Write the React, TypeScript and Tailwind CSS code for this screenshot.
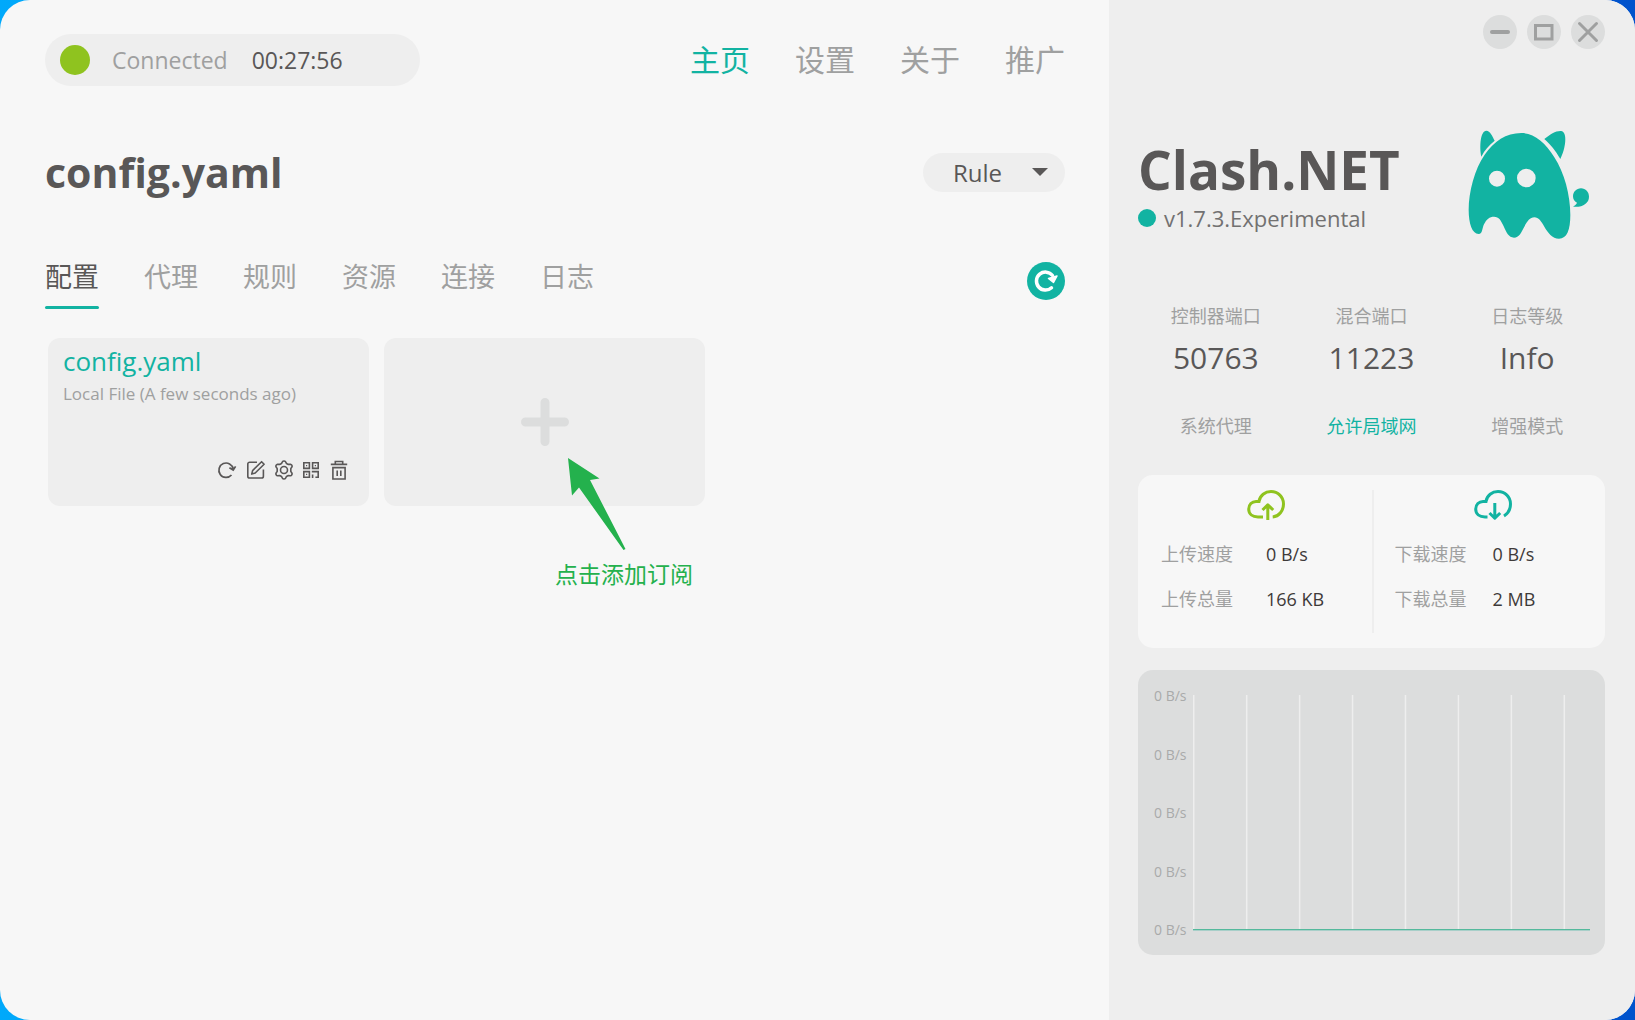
import { useState } from 'react';

const navItems = ['主页', '设置', '关于', '推广'];

const tabs = ['配置', '代理', '规则', '资源', '连接', '日志'];

const ports = [
  { label: '控制器端口', value: '50763' },
  { label: '混合端口', value: '11223' },
  { label: '日志等级', value: 'Info' },
];

const switches = [
  { label: '系统代理', on: false },
  { label: '允许局域网', on: true },
  { label: '增强模式', on: false },
];

const speeds = ['0 B/s', '0 B/s', '0 B/s', '0 B/s', '0 B/s'];

function GhostLogo() {
  return (
    <svg viewBox="0 0 450 390" className="w-[150px] h-[130px]" fill="#12b3a2" aria-label="Clash.NET logo">
      <path
        fillRule="evenodd"
        d="M214 39C252 39 285 66 313 112C343 158 361 225 361 285C361 330 351 356 327 356C307 356 293 337 283 320C273 303 266 292 253 292C240 292 232 303 223 320C214 337 207 353 192 353C176 353 169 337 161 319C153 301 147 290 132 290C119 290 109 298 102 313C96 325 98 342 86 342C66 342 56 310 56 270C56 215 74 147 104 104C132 64 168 39 214 39ZM141 152a24 24 0 1 0 0 48a24 24 0 1 0 0-48ZM229 146a28 28 0 1 0 0 56a28 28 0 1 0 0-56Z"
      />
      <path d="M94 110C88 80 91 32 109 32C120 32 128 50 134 62C117 75 104 90 94 110Z" />
      <path d="M283 57C300 43 318 32 333 33C354 36 347 86 331 117C316 91 303 75 283 57Z" />
      <path d="M393 205C407 205 417 216 417 230C417 250 397 263 369 260C375 256 380 252 381 248C373 245 369 237 369 229C369 216 379 205 393 205Z" />
    </svg>
  );
}

function ReloadIcon() {
  return (
    <svg viewBox="1 0 20 20" className="w-5 h-5" fill="none" stroke="currentColor" strokeWidth="1.7">
      <path d="M15.5 15A7.2 7.2 0 1 1 17.2 9" />
      <path d="M13.4 7.8L17.2 10L19.6 6.4" />
      <path d="M14.5 8.3L17.8 7.2L17.2 9.8Z" fill="currentColor" stroke="none" />
    </svg>
  );
}

function EditIcon() {
  return (
    <svg viewBox="-1 0 20 20" className="w-5 h-5" fill="none" stroke="currentColor" strokeWidth="1.6">
      <path d="M11 2.2H3.6A1.8 1.8 0 0 0 1.8 4V16.2A1.8 1.8 0 0 0 3.6 18H15.6A1.8 1.8 0 0 0 17.4 16.2V9.5" />
      <path d="M15.6 1.7L18.1 4.3L9.2 13L5.7 14.1L6.6 10.6Z" strokeLinejoin="round" />
    </svg>
  );
}

function GearIcon() {
  return (
    <svg viewBox="-1 0 20 20" className="w-5 h-5" fill="none" stroke="currentColor" strokeWidth="1.6" strokeLinejoin="round">
      <path d="M8.6 1.5C9.2 .8 10.8 .8 11.4 1.5L12.4 3.4C12.9 3.9 13.6 4.3 14.3 4.4L16.5 4.2C17.5 4.3 18.4 5.8 18 6.8L16.8 8.6V11.4L18 13.2C18.4 14.2 17.5 15.7 16.5 15.8L14.3 15.6C13.6 15.7 12.9 16.1 12.4 16.6L11.4 18.5C10.8 19.2 9.2 19.2 8.6 18.5L7.6 16.6C7.1 16.1 6.4 15.7 5.7 15.6L3.5 15.8C2.5 15.7 1.6 14.2 2 13.2L3.2 11.4V8.6L2 6.8C1.6 5.8 2.5 4.3 3.5 4.2L5.7 4.4C6.4 4.3 7.1 3.9 7.6 3.4Z" />
      <circle cx="10" cy="10" r="3.5" />
    </svg>
  );
}

function QrIcon() {
  return (
    <svg viewBox="0 0 20 20" className="w-5 h-5" fill="none" stroke="currentColor" strokeWidth="1.6">
      <path d="M2.8 2.8H8.4V8.4H2.8ZM11.6 2.8H17.2V8.4H11.6ZM2.8 11.6H8.4V17.2H2.8Z" />
      <path d="M5 5h1.2v1.2H5ZM13.8 5H15v1.2h-1.2ZM5 13.8h1.2V15H5Z" fill="currentColor" stroke="none" />
      <path d="M10.8 11.6H17.2V17.2H14.4M11.6 14.6V18" />
    </svg>
  );
}

function TrashIcon() {
  return (
    <svg viewBox="0 0 20 20" className="w-5 h-5" fill="none" stroke="currentColor" strokeWidth="1.6">
      <path d="M1.8 4.4H18.2M6.3 4.4V1.5H13.7V4.4M3.9 7.6H16.1V19H3.9Z" />
      <path d="M8.2 10.4V16M11.8 10.4V16" />
    </svg>
  );
}

function CloudIcon({ up }: { up: boolean }) {
  return (
    <svg
      viewBox="0 0 38 30"
      className="w-[38px] h-[30px]"
      fill="none"
      stroke={up ? '#8fc31f' : '#12b3a2'}
      strokeWidth="3"
    >
      <path d={up
        ? 'M16 27H11C5.5 27 1.7 24 1.7 19C1.7 14.5 5 11.4 9 11.4H12C13 5.5 18 1.6 24 1.6C31 1.6 36.5 7 36.5 14C36.5 20.5 32 26.5 25.7 27'
        : 'M13.5 27H11C5.5 27 1.7 24 1.7 19C1.7 14.5 5 11.4 9 11.4H12C13 5.5 18 1.6 24 1.6C31 1.6 36.5 7 36.5 14C36.5 19 34 23.5 30 26'}
      />
      {up
        ? <path d="M20.8 30V15M15.5 20L20.8 14.8L26.2 20" strokeLinejoin="round" />
        : <path d="M20.8 13V28M15.5 23L20.8 28.2L26.2 23" strokeLinejoin="round" />}
    </svg>
  );
}

const cardActions = [
  { name: 'Update', icon: <ReloadIcon /> },
  { name: 'Edit', icon: <EditIcon /> },
  { name: 'Settings', icon: <GearIcon /> },
  { name: 'QR code', icon: <QrIcon /> },
  { name: 'Delete', icon: <TrashIcon /> },
];

const windowButtons = [
  { name: 'Minimize', path: 'M9 17H25', width: 4 },
  { name: 'Maximize', path: 'M8.5 10.5H25V24H8.5Z', width: 3 },
  { name: 'Close', path: 'M8.5 8.5L25.5 25.5M25.5 8.5L8.5 25.5', width: 3 },
];

function Traffic({ up, speed, total }: { up: boolean; speed: string; total: string }) {
  const kind = up ? '上传' : '下载';
  return (
    <div className={up ? 'flex-1 pl-[23px]' : 'flex-1 pl-[21px]'}>
      <div className={up ? 'pl-[86px]' : 'pl-[79px]'}>
        <CloudIcon up={up} />
      </div>
      <dl className={`mt-[14px] grid gap-y-[5px] text-[18px] leading-10 ${up ? 'grid-cols-[105px_1fr]' : 'grid-cols-[98px_1fr]'}`}>
        <dt className="text-[#9fa0a0]">{kind}速度</dt>
        <dd className="text-[#3e3a39]">{speed}</dd>
        <dt className="text-[#9fa0a0]">{kind}总量</dt>
        <dd className="text-[#3e3a39]">{total}</dd>
      </dl>
    </div>
  );
}

export default function App() {
  const [nav, setNav] = useState('主页');
  const [tab, setTab] = useState('配置');

  return (
    <div className="min-h-screen bg-linear-to-r from-[#00a9fb] to-[#0052cc] font-['Open_Sans','Noto_Sans_CJK_SC',sans-serif]">
      <div className="flex min-h-screen overflow-hidden rounded-[30px] bg-[#f7f7f7]">
        <main className="flex-1 pt-[34px] pl-[45px] pr-11">
          <header className="flex items-center justify-between">
            <div className="flex h-[52px] w-[375px] items-center rounded-full bg-[#eeeeee] pl-[15px] text-[23px]">
              <span className="size-[30px] rounded-full bg-[#8fc31f]" />
              <span className="ml-[22px] text-[#9fa0a0]">Connected</span>
              <span className="ml-6 text-[#595757]">00:27:56</span>
            </div>
            <nav className="flex gap-[45px] text-[30px] leading-[52px]">
              {navItems.map((item) => (
                <button
                  key={item}
                  onClick={() => setNav(item)}
                  className={nav === item ? 'text-[#12b3a2]' : 'text-[#9fa0a0]'}
                >
                  {item}
                </button>
              ))}
            </nav>
          </header>

          <div className="mt-[67px] flex h-[39px] items-center justify-between">
            <h1 className="text-[41px] font-bold text-[#595757]">config.yaml</h1>
            <div className="relative">
              <select
                aria-label="Mode"
                className="h-[39px] w-[142px] appearance-none rounded-full bg-[#eeeeee] pl-[30px] text-[24px] leading-[39px] text-[#595757]"
              >
                <option>Rule</option>
                <option>Global</option>
                <option>Direct</option>
              </select>
              <svg viewBox="0 0 16 8" className="pointer-events-none absolute right-[17px] top-[15px] h-2 w-4" fill="#595757">
                <path d="M0 0H16L8 8Z" />
              </svg>
            </div>
          </div>

          <div className="mt-[65px] flex items-center justify-between">
            <div className="flex gap-[45px] text-[27px] leading-10">
              {tabs.map((item) => (
                <button key={item} onClick={() => setTab(item)} className={tab === item ? 'text-[#595757]' : 'text-[#9fa0a0]'}>
                  {item}
                  <span className={`mt-[9px] block h-[3px] rounded-full ${tab === item ? 'bg-[#12b3a2]' : ''}`} />
                </button>
              ))}
            </div>
            <button aria-label="Refresh" className="mb-1 size-[38px] rounded-full bg-[#12b3a2]">
              <svg viewBox="0 0 38 38" className="size-[38px]" fill="none" stroke="#fff" strokeWidth="3.5" strokeLinecap="round">
                <path d="M24.5 25.8A9 9 0 1 1 25.5 13.5" />
                <path d="M21.5 16.5L30 14L26.5 20.5Z" fill="#fff" strokeWidth="1.5" strokeLinejoin="round" />
              </svg>
            </button>
          </div>

          <div className="mt-[29px] ml-[3px] flex gap-[15px]">
            <div className="flex h-[168px] w-[321px] flex-col rounded-xl bg-[#eeeeee] px-[15px] pt-[6px] pb-[26px]">
              <h2 className="text-[26px] leading-[34px] text-[#12b3a2]">config.yaml</h2>
              <p className="text-[17px] leading-8 text-[#9fa0a0]">Local File (A few seconds ago)</p>
              <div className="mt-auto flex justify-end gap-2 pr-[5px] text-[#595757]">
                {cardActions.map((a) => (
                  <button key={a.name} aria-label={a.name}>{a.icon}</button>
                ))}
              </div>
            </div>
            <div className="relative">
              <button aria-label="Add" className="flex h-[168px] w-[321px] items-center justify-center rounded-xl bg-[#eeeeee]">
                <svg viewBox="0 0 48 48" className="size-12" stroke="#dcdddd" strokeWidth="9" strokeLinecap="round">
                  <path d="M24 4.5V43.5M4.5 24H43.5" />
                </svg>
              </button>
              <svg viewBox="0 0 58 93" className="pointer-events-none absolute left-[184px] top-[120px] h-[93px] w-[58px]" fill="#24b14d">
                <path d="M0 0L31.5 20.5L22 22L57.5 91L55.5 92L11 29.5L4 37.5Z" />
              </svg>
              <p className="absolute left-[171px] top-[220px] whitespace-nowrap text-[23px] leading-8 text-[#24b14d]">点击添加订阅</p>
            </div>
          </div>
        </main>

        <aside className="w-[526px] shrink-0 bg-[#eeeeee] pt-[15px] pr-[30px] pl-[29px] pb-10">
          <div className="flex justify-end gap-[10px]">
            {windowButtons.map((b) => (
              <button key={b.name} aria-label={b.name} className="size-[34px] rounded-full bg-[#dcdddd]">
                <svg viewBox="0 0 34 34" className="size-[34px]" fill="none" stroke="#9fa0a0" strokeWidth={b.width} strokeLinecap="round">
                  <path d={b.path} />
                </svg>
              </button>
            ))}
          </div>

          <div className="mt-[71px] flex items-center justify-between pr-[5px]">
            <div>
              <h2 className="text-[53px] leading-[66px] font-bold text-[#595757]">Clash.NET</h2>
              <p className="flex items-center gap-2 text-[22px] leading-[30px] text-[#727171]">
                <span className="size-[18px] rounded-full bg-[#12b3a2]" />
                v1.7.3.Experimental
              </p>
            </div>
            <GhostLogo />
          </div>

          <dl className="mt-[50px] grid grid-cols-3 text-center">
            {ports.map((p) => (
              <div key={p.label}>
                <dt className="text-[18px] leading-8 text-[#9fa0a0]">{p.label}</dt>
                <dd className="text-[30px] leading-[52px] text-[#595757]">{p.value}</dd>
              </div>
            ))}
          </dl>
          <div className="mt-[26px] grid grid-cols-3 text-[18px] leading-8">
            {switches.map((s) => (
              <button key={s.label} aria-pressed={s.on} className={s.on ? 'text-[#12b3a2]' : 'text-[#9fa0a0]'}>
                {s.label}
              </button>
            ))}
          </div>

          <section className="mt-[33px] flex rounded-[15px] bg-[#f7f7f7] py-[15px]">
            <Traffic up speed="0 B/s" total="166 KB" />
            <div className="h-[143px] w-[2px] bg-[#eeeeee]" />
            <Traffic up={false} speed="0 B/s" total="2 MB" />
          </section>

          <section className="mt-[22px] flex h-[285px] gap-[5px] rounded-[15px] bg-[#dcdddd] pl-4 pr-[15px] pt-4 pb-[15px]">
            <div className="flex w-[34px] flex-col justify-between text-[14px] leading-5 text-[#a9aaaa]">
              {speeds.map((s, i) => (
                <span key={i} className="whitespace-nowrap">{s}</span>
              ))}
            </div>
            <svg className="my-[9px] h-[236px] flex-1" aria-label="Traffic chart">
              {[0, 1, 2, 3, 4, 5, 6, 7].map((i) => (
                <rect key={i} x={`${(i * 100) / 7.5}%`} y="0" width="1.5" height="234" fill="#eeeeee" />
              ))}
              <rect x="0" y="234" width="100%" height="1" fill="#54b99c" />
              <rect x="0" y="235" width="100%" height="1" fill="#a8cfc9" />
            </svg>
          </section>
        </aside>
      </div>
    </div>
  );
}
